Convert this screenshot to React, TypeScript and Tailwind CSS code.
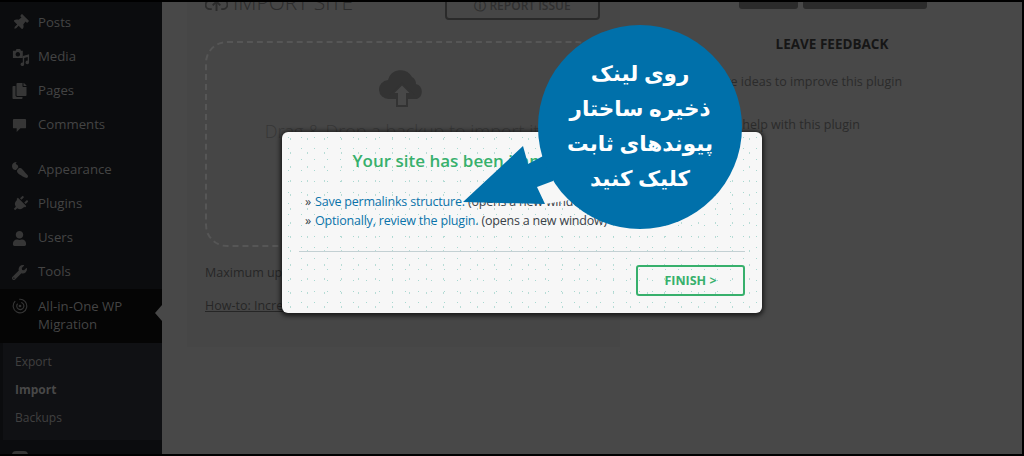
import React from "react";
import { FaThumbtack, FaPaintBrush, FaPlug, FaUser, FaWrench, FaCopy } from "react-icons/fa";

const MediaIcon = () => (
  <svg viewBox="0 0 20 20" className="w-[18px] h-[18px]" fill="currentColor">
    <path d="M1 3h3l1-2h4l1 2h2v8H1z M6.500 4.500a2.500 2.500 0 1 0 .01 0z" fillRule="evenodd" />
    <path d="M12 9l7-2v9a2 2 0 1 1-1.500-1.900V10l-4 1v7a2 2 0 1 1-1.500-1.900z" />
  </svg>
);

const CommentIcon = () => (
  <svg viewBox="0 0 16 16" className="w-[15px] h-[15px]" fill="currentColor">
    <path d="M2 1h12a1 1 0 0 1 1 1v8a1 1 0 0 1-1 1H9l-4 4v-4H2a1 1 0 0 1-1-1V2a1 1 0 0 1 1-1z" />
  </svg>
);

const MigrationIcon = () => (
  <svg viewBox="0 0 20 20" className="w-[16px] h-[16px]" fill="none" stroke="currentColor" strokeWidth="1.4">
    <path d="M4 4a8.500 8.500 0 1 0 5-2.400" />
    <path d="M7 7a4.500 4.500 0 1 0 4.500-1.400" />
    <circle cx="10" cy="10" r="1" fill="currentColor" />
  </svg>
);

const CloudUpload = () => (
  <svg viewBox="0 0 46 38" className="w-[46px] h-[38px]">
    <path d="M10 29a9.500 9.500 0 0 1-1-19 13 13 0 0 1 24-3 8 8 0 0 1 4 7 8 8 0 0 1 1 15z" fill="#333333" />
    <path d="M23 14l10 10h-5v12H18V24h-5z" fill="#484848" stroke="#333333" strokeWidth="2" />
  </svg>
);

const SmallCloud = () => (
  <svg viewBox="0 0 24 20" className="w-[23px] h-[19px] mr-[5px]" fill="none" stroke="#2c2c2c" strokeWidth="2">
    <path d="M7 17H5a4 4 0 0 1 0-9 7 7 0 0 1 13-1 5 5 0 0 1 1 10h-2" />
    <path d="M12 19v-9M8 13l4-4 4 4" />
  </svg>
);

const menuTop = [
  { label: "Posts", icon: <FaThumbtack className="w-[16px] h-[16px] rotate-45" /> },
  { label: "Media", icon: <MediaIcon /> },
  { label: "Pages", icon: <FaCopy className="w-[15px] h-[16px]" /> },
  { label: "Comments", icon: <CommentIcon /> },
];

const menuBottom = [
  { label: "Appearance", icon: <FaPaintBrush className="w-[16px] h-[16px] rotate-90" /> },
  { label: "Plugins", icon: <FaPlug className="w-[16px] h-[16px] rotate-45" /> },
  { label: "Users", icon: <FaUser className="w-[15px] h-[15px]" /> },
  { label: "Tools", icon: <FaWrench className="w-[15px] h-[15px]" /> },
];

function MenuItem({ label, icon }: { label: string; icon: React.ReactNode }) {
  return (
    <div className="h-[34px] shrink-0 flex items-center text-[#444444] text-[13.200px]">
      <div className="w-[38px] pl-[12px] text-[#363636] flex">{icon}</div>
      <span>{label}</span>
    </div>
  );
}

function Sidebar() {
  return (
    <aside className="w-[162px] shrink-0 bg-[#0b0c0e] flex flex-col pt-[4px] overflow-hidden">
      {menuTop.map((m) => (
        <MenuItem key={m.label} {...m} />
      ))}
      <div className="h-[11px] shrink-0" />
      {menuBottom.map((m) => (
        <MenuItem key={m.label} {...m} />
      ))}
      <div className="relative h-[54px] shrink-0 bg-[#050505] flex items-start pt-[8px] text-[#444444] text-[13.200px] leading-[18px]">
        <div className="w-[38px] pl-[12px] text-[#363636] flex pt-[1px]">
          <MigrationIcon />
        </div>
        <span>
          All-in-One WP
          <br />
          Migration
        </span>
        <div className="absolute right-0 top-[16px] border-y-[8px] border-r-[7px] border-y-transparent border-r-[#484848]" />
      </div>
      <div className="ml-[3px] h-[97px] shrink-0 bg-[#101114] pt-[5px] text-[12px] text-[#404040]">
        <div className="h-[28px] flex items-center pl-[12px]">Export</div>
        <div className="h-[28px] flex items-center pl-[12px] font-bold text-[#484848]">Import</div>
        <div className="h-[28px] flex items-center pl-[12px]">Backups</div>
      </div>
      <div className="pt-[2px] shrink-0">
        <MenuItem label="Settings" icon={<div className="w-[16px] h-[16px] bg-[#363636] rounded-sm" />} />
      </div>
    </aside>
  );
}

function ImportCard() {
  return (
    <section className="ml-[25px] w-[433px] h-[365px] -mt-[20px] shrink-0 bg-[#464646] pl-[18px] pr-[20px] text-[#262626]">
      <div className="flex justify-between items-end h-[38px]">
        <div className="flex items-center text-[#2c2c2c] text-[21px] font-light leading-none pb-[7px]">
          <SmallCloud />
          IMPORT SITE
        </div>
        <div className="w-[155px] h-[28px] border-2 border-[#2a2a2a] rounded-[4px] flex items-center justify-center text-[#303030] text-[12px] font-semibold">
          ⓘ REPORT ISSUE
        </div>
      </div>
      <div className="mt-[21px] w-[394px] h-[206px] border-2 border-dashed border-[#565656] rounded-[22px] flex flex-col items-center pt-[27px]">
        <CloudUpload />
        <p className="mt-[10px] text-[18px] text-[#363636] font-light whitespace-nowrap">Drag &amp; Drop a backup to import it</p>
      </div>
      <p className="mt-[17px] text-[12.500px]">Maximum upload file size: 512 MB.</p>
      <p className="mt-[14px] text-[12.500px] underline">How-to: Increase maximum upload file size</p>
    </section>
  );
}

function FeedbackColumn() {
  return (
    <section className="ml-[60px] w-[340px] -mt-[10px] text-[#2b2b2b] text-[12.500px]">
      <div className="flex gap-[5px] h-[17px] ml-[59px]">
        <div className="w-[59px] h-full bg-[#2b2b2b] rounded-[3px]" />
        <div className="w-[124px] h-full bg-[#2b2b2b] rounded-[3px]" />
      </div>
      <h3 className="mt-[25px] ml-[2px] w-[300px] text-center font-bold text-[#161616] text-[13.500px]">LEAVE FEEDBACK</h3>
      <p className="mt-[19px] ml-[23px]">I have ideas to improve this plugin</p>
      <p className="mt-[24px] ml-[23px]">I need help with this plugin</p>
    </section>
  );
}

function Modal() {
  return (
    <div className="absolute left-[282px] top-[132px] w-[480px] h-[181px] rounded-[6px] bg-[#f7f7f7] bg-[radial-gradient(#a8d8d0_0.7px,transparent_0.9px),radial-gradient(#b8dcd6_0.7px,transparent_0.9px)] bg-[length:13px_11px,17px_14px] shadow-[0_1px_4px_2px_rgba(0,0,0,0.6)] px-[17px] text-[12.500px] tracking-[-0.2px] text-[#3a4248]">
      <h2 className="mt-[18px] text-center text-[#37b06c] text-[17px] tracking-normal font-semibold leading-[22px] whitespace-nowrap">Your site has been imported successfully!</h2>
      <div className="mt-[20px] pl-[6px] leading-[19px]">
        <p className="whitespace-nowrap">
          <span className="inline-block w-[10px]">»</span>
          <span className="text-[#0a73aa]">Save permalinks structure.</span> (opens a new window)
        </p>
        <p className="whitespace-nowrap">
          <span className="inline-block w-[10px]">»</span>
          <span className="text-[#0a73aa]">Optionally, review the plugin.</span> (opens a new window)
        </p>
      </div>
      <hr className="mt-[21px] border-[#c3d0d3]" />
      <div className="mt-[13px] flex justify-end">
        <div className="w-[109px] h-[31px] pt-[1px] border-2 border-[#37b06c] rounded-[3px] flex items-center justify-center text-[#37b06c] text-[12.500px] tracking-normal font-bold">FINISH &gt;</div>
      </div>
    </div>
  );
}

function Callout() {
  return (
    <>
      <svg className="absolute left-0 top-0 pointer-events-none" width="1024" height="456" viewBox="0 0 1024 456">
        <polygon points="537,187 553,181 570,200 545,204" fill="#f7f7f7" />
        <polygon points="463,202 523,146 528,164 545,155 556,165 553,181 537,187 545,204" fill="#0070aa" />
      </svg>
      <div className="absolute left-[538px] top-[25px] w-[204px] h-[204px] pb-[5px] rounded-full bg-[#0070aa] flex flex-col items-center justify-center text-white font-bold text-[21.500px] leading-[35px]" dir="rtl">
        <p>روی لینک</p>
        <p>ذخیره ساختار</p>
        <p>پیوندهای ثابت</p>
        <p>کلیک کنید</p>
      </div>
    </>
  );
}

export default function App() {
  return (
    <div className="relative w-[1024px] h-[456px] overflow-hidden bg-black pt-[2px] pb-[2px] pr-[2px] flex font-['Open_Sans','DejaVu_Sans',sans-serif]">
      <Sidebar />
      <main className="flex-1 bg-[#484848] flex overflow-hidden">
        <ImportCard />
        <FeedbackColumn />
      </main>
      <Modal />
      <Callout />
    </div>
  );
}
